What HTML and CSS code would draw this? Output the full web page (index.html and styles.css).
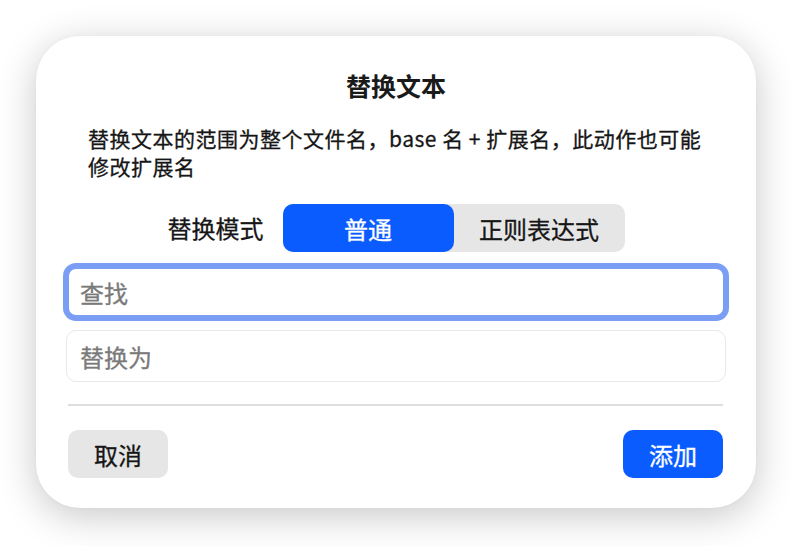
FILE: index.html
```html
<!DOCTYPE html>
<html lang="zh-CN">
<head>
<meta charset="utf-8">
<title>替换文本</title>
<link rel="stylesheet" href="styles.css">
</head>
<body>
<div class="dialog">
  <h1 class="title">替换文本</h1>
  <p class="desc">替换文本的范围为整个文件名，base 名 + 扩展名，此动作也可能修改扩展名</p>
  <div class="mode-row">
    <span class="mode-label">替换模式</span>
    <div class="segmented">
      <div class="seg seg-active">普通</div>
      <div class="seg">正则表达式</div>
    </div>
  </div>
  <input class="field field-focus" type="text" placeholder="查找">
  <input class="field field-second" type="text" placeholder="替换为">
  <div class="divider"></div>
  <div class="footer">
    <button class="btn btn-cancel">取消</button>
    <button class="btn btn-primary">添加</button>
  </div>
</div>
</body>
</html>
```
FILE: styles.css
```css
html, body {
  margin: 0;
  padding: 0;
  background: #ffffff;
}
body {
  font-family: "Noto Sans CJK SC", "Noto Sans", sans-serif;
  font-weight: 400;
  -webkit-text-stroke: 0.3px currentColor;
  color: #161616;
  padding: 36px 0 38px;
  min-height: 546px;
  box-sizing: border-box;
}
.dialog {
  box-sizing: border-box;
  width: 720px;
  margin: 0 0 0 36px;
  padding: 34px 30px 30px;
  background: #ffffff;
  border-radius: 44px;
  box-shadow: 0 8px 38px rgba(0, 0, 0, 0.22), 0 0 2px rgba(0, 0, 0, 0.06);
  display: flex;
  flex-direction: column;
}
.title {
  margin: 0;
  font-size: 25px;
  line-height: 30px;
  font-weight: 700;
  -webkit-text-stroke: 0;
  text-align: center;
  color: #1a1a1a;
}
.desc {
  margin: 24px 22px 0;
  font-size: 21px;
  line-height: 28px;
  letter-spacing: 0.5px;
  color: #161616;
}
.mode-row {
  margin-top: 24px;
  display: flex;
  justify-content: center;
  align-items: center;
  gap: 19px;
}
.mode-label {
  font-size: 24px;
  line-height: 30px;
  color: #161616;
}
.segmented {
  display: grid;
  grid-template-columns: 171px 171px;
  height: 48px;
  background: #e6e6e6;
  border-radius: 10px;
}
.seg {
  display: flex;
  align-items: center;
  justify-content: center;
  font-size: 24px;
  color: #161616;
  border-radius: 10px;
}
.seg-active {
  background: #0b5cff;
  color: #ffffff;
}
.field {
  box-sizing: border-box;
  display: block;
  width: 100%;
  height: 52px;
  margin: 14px 0 0;
  padding: 0 13px;
  border: 1px solid #e8e8e8;
  border-radius: 10px;
  background: #ffffff;
  font-family: "Noto Sans CJK SC", "Noto Sans", sans-serif;
  font-size: 24px;
  color: #161616;
  outline: none;
}
.field::placeholder {
  color: #7a7a7a;
}
.field-focus {
  border: 3px solid #7b9ef5;
  padding: 0 11px;
  box-shadow: 0 0 0 3px #7b9ef5;
}
.field-second {
  margin-top: 12px;
}
.divider {
  height: 2px;
  margin: 22px 3px 0 2px;
  background: #dedede;
}
.footer {
  margin: 24px 3px 0 2px;
  display: flex;
  justify-content: space-between;
}
.btn {
  width: 100px;
  height: 48px;
  border: none;
  border-radius: 10px;
  font-family: "Noto Sans CJK SC", "Noto Sans", sans-serif;
  font-size: 24px;
  -webkit-text-stroke: 0.3px currentColor;
  padding: 0;
  cursor: pointer;
}
.btn-cancel {
  background: #e6e6e6;
  color: #161616;
}
.btn-primary {
  background: #0b5cff;
  color: #ffffff;
}
```
